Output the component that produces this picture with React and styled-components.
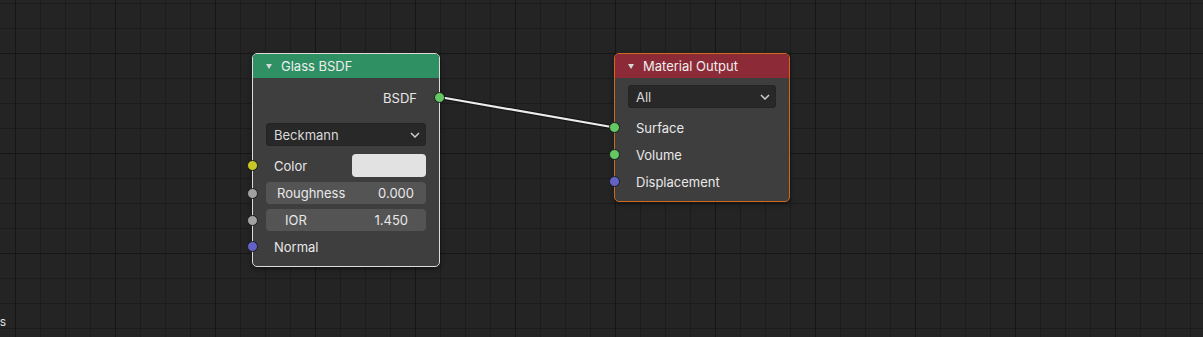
import React from "react";
import styled, { createGlobalStyle } from "styled-components";

const GlobalStyle = createGlobalStyle`
  html, body {
    margin: 0;
    padding: 0;
    background: #232323;
  }
  body {
    font-family: Inter, "DejaVu Sans", "Liberation Sans", sans-serif;
  }
`;

const SOCKET = {
  shader: "#63c763",
  color: "#c7c729",
  float: "#a1a1a1",
  vector: "#6363c7",
};

const Canvas = styled.div`
  position: relative;
  width: 1203px;
  height: 337px;
  overflow: hidden;
  background-color: #242424;
  background-image:
    linear-gradient(to right, #161616 1px, transparent 1px),
    linear-gradient(to bottom, #161616 1px, transparent 1px),
    linear-gradient(to right, #1c1c1c 1px, transparent 1px),
    linear-gradient(to bottom, #1c1c1c 1px, transparent 1px);
  background-size: 100px 100px, 100px 100px, 25px 25px, 25px 25px;
  background-position: 15px 0, 0 53px, 15px 0, 0 3px;
`;

const Links = styled.svg`
  position: absolute;
  inset: 0;
  pointer-events: none;
`;

const Node = styled.div`
  position: absolute;
  left: ${(p) => p.$x}px;
  top: ${(p) => p.$y}px;
  width: ${(p) => p.$w}px;
  box-sizing: border-box;
  border: 1px solid ${(p) => p.$outline};
  border-radius: 5px;
  background: #3e3e3e;
  box-shadow: 0 2px 5px rgba(0, 0, 0, 0.45);
  color: #e8e8e8;
  font-size: 13px;
`;

const Header = styled.div`
  display: flex;
  align-items: center;
  height: 24px;
  padding-left: 13px;
  background: ${(p) => p.$color};
  border-radius: 4px 4px 0 0;
  color: #eeeeee;
`;

const Collapse = styled.svg`
  width: 6px;
  height: 5px;
  margin-right: ${(p) => p.$gap}px;
  flex-shrink: 0;
`;

const Body = styled.div`
  display: flex;
  flex-direction: column;
  padding: ${(p) => p.$top}px 13px 8px 13px;
`;

const Row = styled.div`
  position: relative;
  display: flex;
  align-items: center;
  justify-content: ${(p) => (p.$out ? "flex-end" : "space-between")};
  height: ${(p) => p.$h || 23}px;
  margin-top: ${(p) => p.$mt || 0}px;
`;

const Label = styled.span`
  padding-left: ${(p) => (p.$out ? 0 : 8)}px;
  padding-right: ${(p) => (p.$out ? 9 : 0)}px;
  white-space: nowrap;
`;

const Socket = styled.span`
  position: absolute;
  top: 50%;
  ${(p) => (p.$side === "right" ? "right: -19px;" : "left: -19.5px;")}
  width: 11px;
  height: 11px;
  margin-top: -5.5px;
  box-sizing: border-box;
  border-radius: 50%;
  background: ${(p) => p.$color};
  border: 1px solid #1b1b1b;
`;

const Select = styled.div`
  display: flex;
  align-items: center;
  justify-content: space-between;
  height: 23px;
  margin-top: ${(p) => p.$mt}px;
  padding: 0 6px 0 8px;
  border-radius: 4px;
  background: #282828;
  color: #d9d9d9;
  box-shadow: inset 0 0 0 1px #242424;
`;

const Swatch = styled.div`
  width: 74px;
  height: 23px;
  border-radius: 4px;
  background: #e2e2e2;
`;

const Field = styled.div`
  position: relative;
  display: flex;
  align-items: center;
  justify-content: space-between;
  height: 22px;
  margin-top: ${(p) => p.$mt}px;
  padding: 0 ${(p) => p.$padR}px 0 ${(p) => p.$padL}px;
  border-radius: 4px;
  background: #545454;
  color: #e8e8e8;
`;

const Corner = styled.div`
  position: absolute;
  left: -38px;
  top: 314px;
  color: #e0e0e0;
  font-size: 12px;
`;

const Triangle = ({ gap }) => (
  <Collapse $gap={gap} viewBox="0 0 6 5">
    <polygon points="0,0 6,0 3,5" fill="#d8d8d8" />
  </Collapse>
);

const Chevron = () => (
  <svg width="10" height="6" viewBox="0 0 10 6">
    <polyline points="1,1 5,5 9,1" fill="none" stroke="#cfcfcf" strokeWidth="1.5" />
  </svg>
);

export default function App() {
  return (
    <>
      <GlobalStyle />
      <Canvas>
        <Links width="1203" height="337">
          <line x1="439.5" y1="97" x2="614.5" y2="127.5" stroke="#111" strokeOpacity="0.7" strokeWidth="4.5" />
          <line x1="439.5" y1="97" x2="614.5" y2="127.5" stroke="#ededed" strokeWidth="2.2" />
        </Links>

        <Node $x={252} $y={53} $w={188} $outline="#dcdcdc">
          <Header $color="#2f9064">
            <Triangle gap={9} />
            Glass BSDF
          </Header>
          <Body $top={8}>
            <Row $out>
              <Label $out>BSDF</Label>
              <Socket $side="right" $color={SOCKET.shader} />
            </Row>
            <Select $mt={14}>
              Beckmann
              <Chevron />
            </Select>
            <Row $mt={8}>
              <Socket $color={SOCKET.color} />
              <Label>Color</Label>
              <Swatch />
            </Row>
            <Field $mt={5} $padL={11} $padR={12}>
              <Socket $color={SOCKET.float} />
              <span>Roughness</span>
              <span>0.000</span>
            </Field>
            <Field $mt={5} $padL={19} $padR={18}>
              <Socket $color={SOCKET.float} />
              <span>IOR</span>
              <span>1.450</span>
            </Field>
            <Row $mt={4}>
              <Socket $color={SOCKET.vector} />
              <Label>Normal</Label>
            </Row>
          </Body>
        </Node>

        <Node $x={614} $y={53} $w={176} $outline="#d0691f">
          <Header $color="#8d2a38">
            <Triangle gap={9} />
            Material Output
          </Header>
          <Body $top={7}>
            <Select $mt={0}>
              All
              <Chevron />
            </Select>
            <Row $mt={8}>
              <Socket $color={SOCKET.shader} />
              <Label>Surface</Label>
            </Row>
            <Row $mt={4}>
              <Socket $color={SOCKET.shader} />
              <Label>Volume</Label>
            </Row>
            <Row $mt={4}>
              <Socket $color={SOCKET.vector} />
              <Label>Displacement</Label>
            </Row>
          </Body>
        </Node>

        <Corner>Options</Corner>
      </Canvas>
    </>
  );
}
